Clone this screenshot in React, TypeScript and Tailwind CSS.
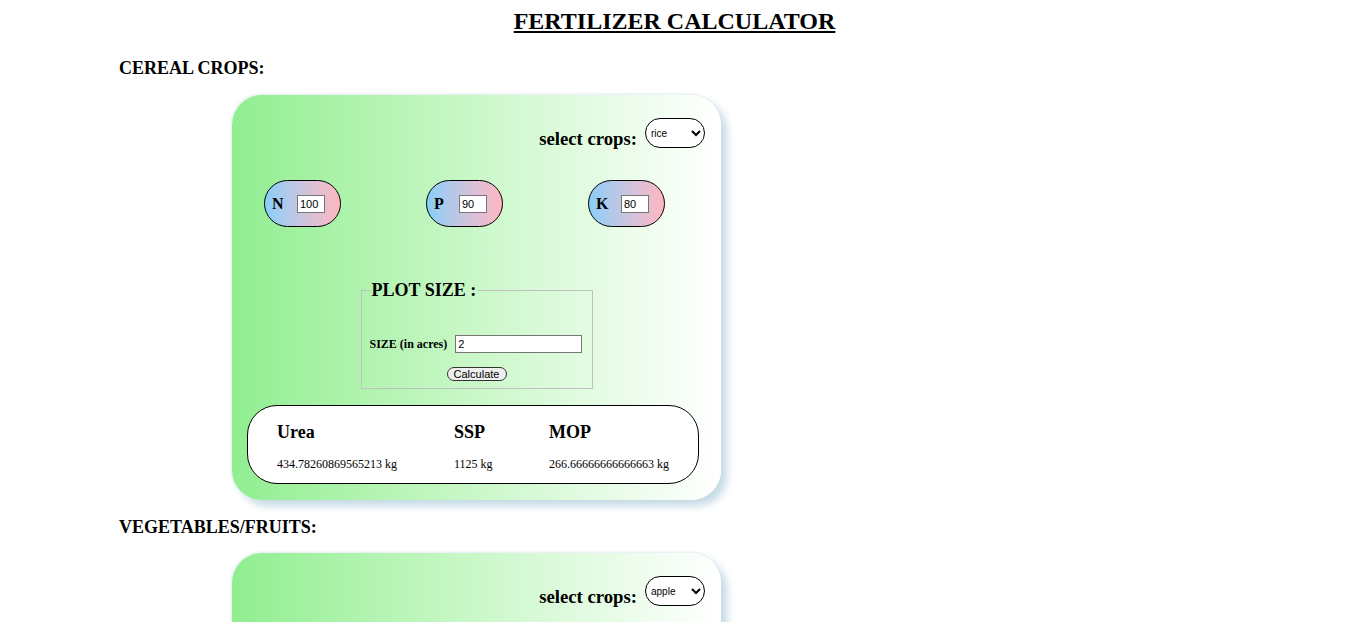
import { useState } from "react";

type Crop = { name: string; n: string; p: string; k: string };

function Nutrient({ label, value }: { label: string; value: string }) {
  return (
    <div className="flex h-[47px] w-[77px] items-center rounded-full border border-black bg-gradient-to-r from-[#87cefa] to-[#ffb6c1] pl-[7px]">
      <span className="text-[16px] font-bold leading-[18px]">{label}</span>
      <input
        type="text"
        defaultValue={value}
        className="ml-auto mr-[15px] h-[18px] w-[28px] border border-[#767676] bg-white px-[2px] font-['Liberation_Sans',Arial,sans-serif] text-[11px] leading-[14px] text-black"
      />
    </div>
  );
}

type Result = { urea: string; ssp: string; mop: string };

function Calculator({ crops, selected, initial }: { crops: Crop[]; selected: string; initial: Result }) {
  const [crop, setCrop] = useState(selected);
  const [size, setSize] = useState("2");
  const [result, setResult] = useState<Result>(initial);
  const c = crops.find((x) => x.name === crop) ?? crops[0];

  const calculate = () => {
    const acres = parseFloat(size) || 0;
    setResult({
      urea: String((parseFloat(c.n) / 0.46) * acres),
      ssp: String((parseFloat(c.p) / 0.16) * acres),
      mop: String((parseFloat(c.k) / 0.6) * acres),
    });
  };

  return (
    <div className="ml-[232px] w-[489px] rounded-[30px] bg-gradient-to-r from-[#90ee90] to-white px-[15px] pb-[16px] pt-[23px] shadow-[6px_6px_8px_#c4dae4,_-1px_-1px_3px_#e4ecf0]">
      {/* crop picker */}
      <div className="flex justify-end pr-[1px]">
        <span className="mr-[8px] mt-[10px] text-[18.72px] font-bold leading-[21px]">select crops:</span>
        <select
          value={crop}
          onChange={(e) => setCrop(e.target.value)}
          className="h-[30px] w-[60px] rounded-full border border-black bg-white pl-[1px] font-['Liberation_Sans',Arial,sans-serif] text-[10px] text-black"
        >
          {crops.map((x) => (
            <option key={x.name} value={x.name}>
              {x.name}
            </option>
          ))}
        </select>
      </div>

      {/* N P K */}
      <div className="mt-[31px] flex gap-[85px] pl-[17px]">
        <Nutrient label="N" value={c.n} />
        <Nutrient label="P" value={c.p} />
        <Nutrient label="K" value={c.k} />
      </div>

      {/* plot size */}
      <div className="mt-[53px] flex justify-center">
        <fieldset className="w-[232px] border border-[#c0c0c0] px-[8px] pb-[7px]">
          <legend className="px-[2px] text-[18px] font-bold leading-[21px]">PLOT SIZE :</legend>
          <div className="mt-[34px] flex items-center">
            <span className="text-[12px] font-bold leading-[14px]">SIZE (in acres)</span>
            <input
              type="text"
              value={size}
              onChange={(e) => setSize(e.target.value)}
              className="ml-[8px] h-[18px] w-[127px] border border-[#767676] bg-white px-[2px] font-['Liberation_Sans',Arial,sans-serif] text-[11px] text-black"
            />
          </div>
          <div className="mt-[14px] flex justify-center">
            <button
              onClick={calculate}
              className="h-[14px] w-[60px] rounded-full border border-[#333] bg-[#efefef] font-['Liberation_Sans',Arial,sans-serif] text-[11px] leading-[12px] text-black"
            >
              Calculate
            </button>
          </div>
        </fieldset>
      </div>

      {/* result */}
      <div className="mt-[16px] w-[452px] rounded-[30px] border border-black bg-white px-[29px] pb-[12px] pt-[16px]">
        <div className="grid grid-cols-[177px_95px_1fr]">
          <span className="text-[18px] font-bold leading-[21px]">Urea</span>
          <span className="text-[18px] font-bold leading-[21px]">SSP</span>
          <span className="text-[18px] font-bold leading-[21px]">MOP</span>
          <span className="mt-[14px] text-[12px] leading-[14px]">{result.urea} kg</span>
          <span className="mt-[14px] text-[12px] leading-[14px]">{result.ssp} kg</span>
          <span className="mt-[14px] text-[12px] leading-[14px]">{result.mop} kg</span>
        </div>
      </div>
    </div>
  );
}

const cereals: Crop[] = [
  { name: "rice", n: "100", p: "90", k: "80" },
  { name: "wheat", n: "120", p: "60", k: "40" },
  { name: "maize", n: "150", p: "75", k: "40" },
];

const fruits: Crop[] = [
  { name: "apple", n: "70", p: "35", k: "70" },
  { name: "banana", n: "200", p: "60", k: "300" },
  { name: "tomato", n: "120", p: "80", k: "60" },
];

export default function App() {
  return (
    <div className="h-screen overflow-y-scroll bg-white font-['Liberation_Serif','Times_New_Roman',serif] text-black">
      <div className="w-[1349px] pb-10">
        <h1 className="pt-[8px] text-center text-[24px] font-bold leading-[27px] underline">FERTILIZER CALCULATOR</h1>

        <h3 className="ml-[119px] mt-[23px] text-[18px] font-bold leading-[21px]">CEREAL CROPS:</h3>
        <div className="mt-[16px]">
          <Calculator
            crops={cereals}
            selected="rice"
            initial={{ urea: "434.78260869565213", ssp: "1125", mop: "266.66666666666663" }}
          />
        </div>

        <h3 className="ml-[119px] mt-[17px] text-[18px] font-bold leading-[21px]">VEGETABLES/FRUITS:</h3>
        <div className="mt-[15px]">
          <Calculator
            crops={fruits}
            selected="apple"
            initial={{ urea: "304.3478260869565", ssp: "437.5", mop: "233.33333333333334" }}
          />
        </div>
      </div>
    </div>
  );
}
